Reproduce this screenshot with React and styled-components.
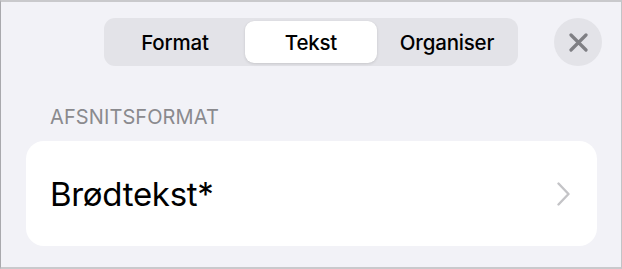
import React from "react";
import styled, { createGlobalStyle } from "styled-components";

const Global = createGlobalStyle`
  html, body { margin: 0; padding: 0; background: #f2f2f7; }
  * { box-sizing: border-box; }
`;

const Frame = styled.div`
  width: 622px;
  height: 269px;
  background: #f2f2f7;
  border-top: 2px solid #c9c9cc;
  border-left: 1px solid #a9a9ad;
  border-right: 1px solid #c3c3c6;
  border-bottom: 2px solid #c9c9cc;
  font-family: Inter, "Liberation Sans", sans-serif;
  display: flex;
  flex-direction: column;
`;

const Header = styled.div`
  display: grid;
  grid-template-columns: 1fr auto 1fr;
  align-items: center;
  padding-top: 16px;
`;

const Segmented = styled.div`
  grid-column: 2;
  display: grid;
  grid-template-columns: repeat(3, 136px);
  height: 48px;
  padding: 3px;
  border-radius: 11px;
  background: #e3e3e8;
`;

const Segment = styled.div`
  display: flex;
  align-items: center;
  justify-content: center;
  margin: 0 ${(p) => (p.$active ? "2px" : "0")};
  border-radius: 9px;
  font-size: 20.5px;
  font-weight: 500;
  color: #000;
  letter-spacing: -0.2px;
  background: ${(p) => (p.$active ? "#ffffff" : "transparent")};
  box-shadow: ${(p) => (p.$active ? "0 1px 3px rgba(0,0,0,0.12), 0 0 1px rgba(0,0,0,0.06)" : "none")};
`;

const CloseButton = styled.div`
  grid-column: 3;
  justify-self: end;
  margin-right: 19px;
  width: 48px;
  height: 48px;
  border-radius: 50%;
  background: #e3e3e8;
  display: flex;
  align-items: center;
  justify-content: center;
`;

const SectionTitle = styled.div`
  margin-top: 39px;
  padding-left: 49px;
  font-size: 20px;
  line-height: 24px;
  color: #8a8a8e;
  letter-spacing: 0.1px;
`;

const Card = styled.div`
  margin: 12px 24px 0 25px;
  height: 105px;
  border-radius: 18px;
  background: #ffffff;
  display: flex;
  align-items: center;
  justify-content: space-between;
  padding: 0 27px 0 24px;
`;

const CardLabel = styled.div`
  font-size: 33px;
  font-weight: 400;
  color: #000;
  letter-spacing: -0.3px;
`;

export default function App() {
  return (
    <>
      <Global />
      <Frame>
        <Header>
          <Segmented>
            <Segment>Format</Segment>
            <Segment $active>Tekst</Segment>
            <Segment>Organiser</Segment>
          </Segmented>
          <CloseButton>
            <svg width="19" height="19" viewBox="0 0 19 19">
              <path d="M2 2 L17 17 M17 2 L2 17" stroke="#7f7f84" strokeWidth="3.2" strokeLinecap="round" fill="none" />
            </svg>
          </CloseButton>
        </Header>
        <SectionTitle>AFSNITSFORMAT</SectionTitle>
        <Card>
          <CardLabel>Brødtekst*</CardLabel>
          <svg width="13" height="24" viewBox="0 0 13 24">
            <polyline points="1.5,1.5 11.5,12 1.5,22.5" stroke="#c4c4c7" strokeWidth="2.4" fill="none" strokeLinecap="round" strokeLinejoin="round" />
          </svg>
        </Card>
      </Frame>
    </>
  );
}
